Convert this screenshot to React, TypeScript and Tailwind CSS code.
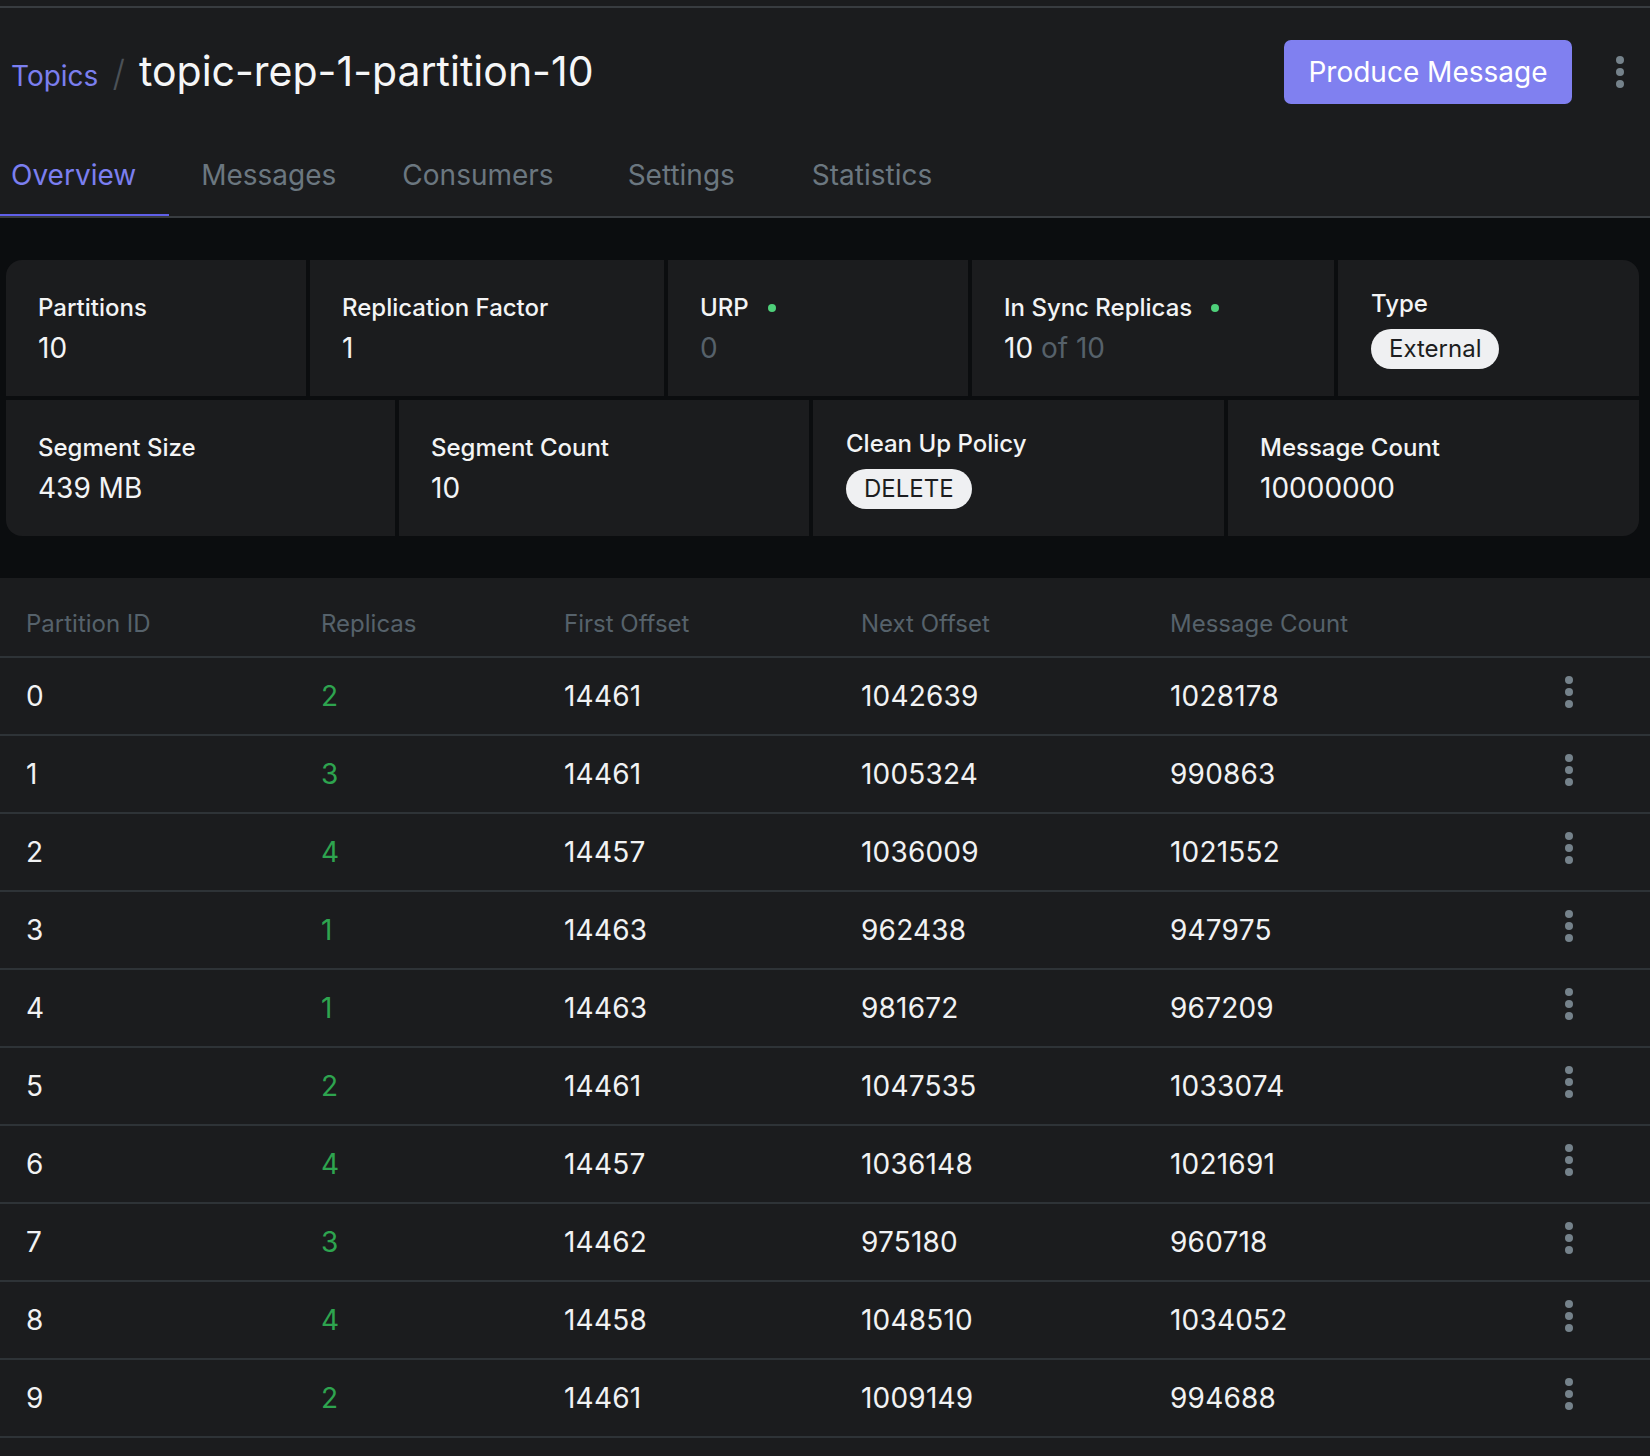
import type { ReactNode } from 'react'

const rows = [
  { id: 0, replicas: 2, first: 14461, next: 1042639, count: 1028178 },
  { id: 1, replicas: 3, first: 14461, next: 1005324, count: 990863 },
  { id: 2, replicas: 4, first: 14457, next: 1036009, count: 1021552 },
  { id: 3, replicas: 1, first: 14463, next: 962438, count: 947975 },
  { id: 4, replicas: 1, first: 14463, next: 981672, count: 967209 },
  { id: 5, replicas: 2, first: 14461, next: 1047535, count: 1033074 },
  { id: 6, replicas: 4, first: 14457, next: 1036148, count: 1021691 },
  { id: 7, replicas: 3, first: 14462, next: 975180, count: 960718 },
  { id: 8, replicas: 4, first: 14458, next: 1048510, count: 1034052 },
  { id: 9, replicas: 2, first: 14461, next: 1009149, count: 994688 },
]

function Kebab() {
  return (
    <div className="flex flex-col gap-[4px]">
      <span className="w-2 h-2 rounded-full bg-[#75828b]" />
      <span className="w-2 h-2 rounded-full bg-[#75828b]" />
      <span className="w-2 h-2 rounded-full bg-[#75828b]" />
    </div>
  )
}

function Dot() {
  return <span className="w-2 h-2 rounded-full bg-[#4ed07a]" />
}

type StatProps = {
  label: ReactNode
  value: ReactNode
  className?: string
}
function Stat({ label, value, className = '' }: StatProps) {
  return (
    <div className={`bg-[#1b1c1e] px-[32px] pt-[4px] flex flex-col justify-center gap-[4px] ${className}`}>
      <div className="text-[24px] leading-[32px] font-medium text-[#f3f4f5] flex items-center gap-[19px]">{label}</div>
      <div className="text-[28px] leading-[40px] text-[#f3f4f5]">{value}</div>
    </div>
  )
}

function PillStat({ label, value, className = '' }: StatProps) {
  return (
    <div className={`bg-[#1b1c1e] px-[33px] flex flex-col justify-center items-start gap-[9px] ${className}`}>
      <div className="text-[24px] leading-[32px] font-medium text-[#f3f4f5]">{label}</div>
      <span className="h-[40px] px-[18px] rounded-full bg-[#eff0f2] text-[#1c1d20] text-[24px] leading-[40px]">
        {value}
      </span>
    </div>
  )
}

const tabs = [
  { name: 'Overview', cls: 'pl-[11px] pr-[33px] text-[#7b7ff0] border-[#5f5fe8]' },
  { name: 'Messages', cls: 'pl-[32px] pr-[34px] text-[#6b7780] border-transparent' },
  { name: 'Consumers', cls: 'pl-[32px] pr-[42px] text-[#6b7780] border-transparent' },
  { name: 'Settings', cls: 'pl-[32px] pr-[45px] text-[#6b7780] border-transparent' },
  { name: 'Statistics', cls: 'pl-[32px] pr-[32px] text-[#6b7780] border-transparent' },
]

export default function App() {
  return (
    <div className="min-h-screen bg-[#1b1c1e] text-white" style={{ fontFamily: 'Inter, "Noto Sans", sans-serif' }}>
      <div className="h-[6px]" />
      <div className="h-[2px] bg-[#383c40]" />

      <header className="h-[128px] flex items-center justify-between pl-[11px] pr-[26px]">
        <div className="flex items-baseline gap-[14px]">
          <span className="text-[28px] text-[#7b7fef]">Topics</span>
          <span className="text-[36px] font-light text-[#4b5157]">/</span>
          <h1 className="text-[41px] text-[#f5f6f7]">topic-rep-1-partition-10</h1>
        </div>
        <div className="flex items-center gap-[44px]">
          <button className="w-[288px] h-[64px] rounded-[7px] bg-[#8080f0] text-[28px] text-white">
            Produce Message
          </button>
          <Kebab />
        </div>
      </header>

      <nav className="flex border-b-2 border-[#383c40]">
        {tabs.map((t) => (
          <div key={t.name} className={`h-[80px] flex items-center text-[28px] border-b-2 ${t.cls}`}>
            {t.name}
          </div>
        ))}
      </nav>

      <section className="bg-[#0b0d0f] pt-[42px] pb-[42px] pl-[6px] pr-[11px]">
        <div className="rounded-[16px] overflow-hidden flex flex-col gap-[4px]">
          <div className="flex gap-[4px] h-[136px]">
            <Stat className="w-[300px]" label="Partitions" value="10" />
            <Stat className="w-[354px]" label="Replication Factor" value="1" />
            <Stat
              className="w-[300px]"
              label={<><span>URP</span><Dot /></>}
              value={<span className="text-[#56616a]">0</span>}
            />
            <Stat
              className="w-[362px]"
              label={<><span>In Sync Replicas</span><Dot /></>}
              value={<>10 <span className="text-[#56616a]">of 10</span></>}
            />
            <PillStat className="flex-1" label="Type" value="External" />
          </div>
          <div className="flex gap-[4px] h-[136px]">
            <Stat className="w-[389px]" label="Segment Size" value="439 MB" />
            <Stat className="w-[410px]" label="Segment Count" value="10" />
            <PillStat className="w-[411px]" label="Clean Up Policy" value="DELETE" />
            <Stat className="flex-1" label="Message Count" value="10000000" />
          </div>
        </div>
      </section>

      <div className="bg-[#1b1c1e] pt-[14px]">
        <div className="flex items-center h-[66px] pl-[26px] pr-[77px] border-b-2 border-[#2e3337] text-[24px] text-[#56626b]">
          <div className="w-[295px]">Partition ID</div>
          <div className="w-[243px]">Replicas</div>
          <div className="w-[297px]">First Offset</div>
          <div className="w-[309px]">Next Offset</div>
          <div className="flex-1">Message Count</div>
          <div className="w-2" />
        </div>
        {rows.map((r) => (
          <div
            key={r.id}
            className="flex items-center h-[78px] pl-[26px] pr-[77px] border-b-2 border-[#2e3337] text-[28px] tracking-[0.2px] text-[#f1f2f3]"
          >
            <div className="w-[295px]">{r.id}</div>
            <div className="w-[243px] text-[#2ea44f]">{r.replicas}</div>
            <div className="w-[297px]">{r.first}</div>
            <div className="w-[309px]">{r.next}</div>
            <div className="flex-1">{r.count}</div>
            <div className="-mt-[8px]">
              <Kebab />
            </div>
          </div>
        ))}
      </div>
    </div>
  )
}
